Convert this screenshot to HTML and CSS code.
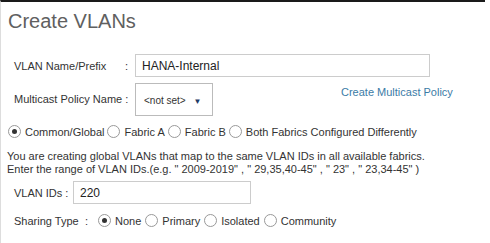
FILE: index.html
```html
<!DOCTYPE html>
<html lang="en">

<head>
    <meta charset="UTF-8">
    <title>Create VLANs</title>
    <link rel="stylesheet" href="styles.css">
</head>

<body>
    <div class="dialog">
        <h1>Create VLANs</h1>

        <div class="row name-row">
            <label class="lbl">VLAN Name/Prefix</label>
            <span class="colon">:</span>
            <input class="field name-field" type="text" value="HANA-Internal">
        </div>

        <div class="row policy-row">
            <label class="lbl">Multicast Policy Name :</label>
            <div class="select">&lt;not set&gt; <span class="caret">&#9660;</span></div>
            <a class="link" href="#">Create Multicast Policy</a>
        </div>

        <div class="radios scope">
            <span class="opt"><span class="radio on"></span>Common/Global</span>
            <span class="opt"><span class="radio"></span>Fabric A</span>
            <span class="opt"><span class="radio"></span>Fabric B</span>
            <span class="opt"><span class="radio"></span>Both Fabrics Configured Differently</span>
        </div>

        <p class="note">You are creating global VLANs that map to the same VLAN IDs in all available fabrics.<br>
            Enter the range of VLAN IDs.(e.g. " 2009-2019" , " 29,35,40-45" , " 23" , " 23,34-45" )</p>

        <div class="row ids-row">
            <label class="lbl">VLAN IDs :</label>
            <input class="field ids-field" type="text" value="220">
        </div>

        <div class="row sharing-row">
            <label class="lbl">Sharing Type</label>
            <span class="colon">:</span>
            <div class="radios">
                <span class="opt"><span class="radio on"></span>None</span>
                <span class="opt"><span class="radio"></span>Primary</span>
                <span class="opt"><span class="radio"></span>Isolated</span>
                <span class="opt"><span class="radio"></span>Community</span>
            </div>
        </div>
    </div>
</body>

</html>
```

FILE: styles.css
```css
* {
    margin: 0;
    padding: 0;
    box-sizing: border-box;
}

body {
    font-family: "Liberation Sans", Arial, sans-serif;
    font-size: 11px;
    color: #333;
    background: #fff;
}

.dialog {
    width: 485px;
    height: 243px;
    border-top: 2px solid #1a1a1a;
    border-left: 1px solid #ddd;
    padding: 0 0 0 6px;
}

h1 {
    font-size: 20px;
    font-weight: normal;
    color: #606060;
    padding: 8px 0 0 1px;
    height: 52px;
}

.row {
    display: flex;
    align-items: center;
    padding-left: 7px;
    white-space: nowrap;
}

.lbl {
    color: #333;
}

.name-row .lbl {
    width: 111px;
}

.colon {
    width: 10px;
}

.field {
    border: 1px solid #ccc;
    height: 23px;
    padding: 0 6px;
    font-family: inherit;
    font-size: 12px;
    color: #222;
    outline: none;
}

.name-field {
    width: 295px;
}

.policy-row {
    margin-top: 6px;
    align-items: flex-start;
}

.policy-row .lbl {
    width: 121px;
    padding-top: 10px;
}

.select {
    width: 78px;
    height: 33px;
    border: 1px solid #bbb;
    font-size: 10px;
    padding: 11px 0 0 8px;
}

.caret {
    font-size: 8px;
    color: #1f3b66;
    margin-left: 5px;
}

.link {
    color: #3b7ba6;
    text-decoration: none;
    margin: 3px 0 0 128px;
}

.radios {
    display: flex;
    align-items: center;
    white-space: nowrap;
}

.scope {
    margin-top: 9px;
    padding-left: 1px;
}

.opt {
    display: flex;
    align-items: center;
    margin-right: 3px;
}

.radio {
    width: 13px;
    height: 13px;
    border: 1px solid #999;
    border-radius: 50%;
    margin-right: 4px;
    display: flex;
    align-items: center;
    justify-content: center;
}

.radio.on::after {
    content: "";
    width: 5px;
    height: 5px;
    border-radius: 50%;
    background: #333;
}

.note {
    margin-top: 12px;
    line-height: 13px;
    white-space: nowrap;
}

.ids-row {
    margin-top: 5px;
}

.ids-row .lbl {
    width: 59px;
}

.ids-field {
    width: 178px;
}

.sharing-row {
    margin-top: 10px;
}

.sharing-row .lbl {
    width: 71px;
}

.sharing-row .colon {
    width: 13px;
}

.sharing-row .opt {
    margin-right: 4px;
}
```
